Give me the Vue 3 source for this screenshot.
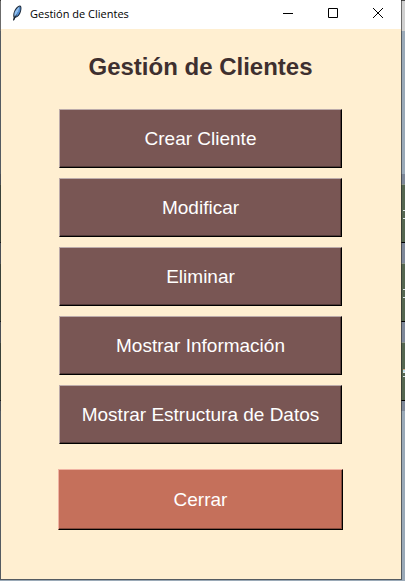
<script setup>
const title = 'Gestión de Clientes'
const actions = [
  'Crear Cliente',
  'Modificar',
  'Eliminar',
  'Mostrar Información',
  'Mostrar Estructura de Datos',
]
</script>

<template>
  <div class="desktop">
    <div class="window">
      <header class="titlebar">
        <svg class="feather" width="16" height="16" viewBox="0 0 16 16" aria-hidden="true">
          <path d="M11 .5 C13 .9 12.6 4.6 11.8 7 C11 9.6 9.2 12.2 6.4 12.8 L5 15.6 L4 15.4 L4.6 12.6 C3.6 9.6 5.2 5.2 7 3 C8.4 1.4 9.8 .4 11 .5 Z" fill="#1b2735" />
          <path d="M11 1.2 C12 2.8 11.4 5.4 10.8 7 C10 9.2 8.6 11 6.8 11.8 L8.8 6.4 Z" fill="#4f8bd2" />
          <path d="M10.8 1.2 L9.4 6 L6 12 C4.2 9.2 5.8 4.6 10.8 1.2 Z" fill="#8fc0f2" />
          <path d="M7 10.4 L4.6 15" stroke="#16202c" stroke-width=".8" fill="none" />
        </svg>
        <span class="caption">{{ title }}</span>
        <div class="controls">
          <button type="button" class="control" aria-label="Minimizar">
            <svg width="10" height="10" viewBox="0 0 10 10"><path d="M0 5.5H10" /></svg>
          </button>
          <button type="button" class="control" aria-label="Maximizar">
            <svg width="10" height="10" viewBox="0 0 10 10"><path d="M.5 .5H9.5V9.5H.5Z" /></svg>
          </button>
          <button type="button" class="control" aria-label="Cerrar ventana">
            <svg width="10" height="10" viewBox="0 0 10 10"><path d="M0 0L10 10M10 0L0 10" /></svg>
          </button>
        </div>
      </header>
      <main class="content">
        <h1>{{ title }}</h1>
        <div class="actions">
          <button v-for="action in actions" :key="action" type="button" class="action">
            {{ action }}
          </button>
        </div>
        <button type="button" class="action close">Cerrar</button>
      </main>
    </div>
    <div class="behind" aria-hidden="true"></div>
  </div>
</template>

<style>
body {
  margin: 0;
}
</style>

<style scoped>
.desktop {
  display: grid;
  grid-template-columns: 1fr 3px;
  box-sizing: border-box;
  min-height: 100vh;
  padding-bottom: 1px;
  font-family: "Liberation Sans", Arial, sans-serif;
  background: linear-gradient(
    #4a4a4a 0 1px, #d0d0d0 1px 31px, #9aa9b7 31px 174px,
    #7d8797 174px 184px, #8d958c 184px 185px, #556650 185px 242px, #000 242px 243px,
    #7d8797 243px 263px, #8d958c 263px 264px, #556650 264px 321px, #000 321px 322px,
    #7d8797 322px 342px, #8d958c 342px 343px, #556650 343px 400px, #000 400px 401px,
    #7d8797 401px 411px, #9aa9b7 411px
  );
}
.window {
  display: flex;
  flex-direction: column;
  border: 1px solid rgba(40, 40, 40, 0.6);
  border-top: 0;
  background: #ffefd1;
  background-clip: padding-box;
}
.behind {
  background: linear-gradient(
    transparent 0 210px, #dfe8ea 210px 211px, transparent 211px 218px, #dfe8ea 218px 219px,
    transparent 219px 289px, #dfe8ea 289px 290px, transparent 290px 297px, #dfe8ea 297px 298px,
    transparent 298px 369px, #c9a98c 369px 370px, #b9dbe4 370px 372px, #dfe8ea 372px 373px,
    transparent 373px 376px, #dfe8ea 376px 377px, transparent 377px
  ) right / 2px 100% no-repeat;
}
.titlebar {
  display: flex;
  align-items: center;
  height: 29px;
  padding-left: 8px;
  background: #fff;
}
.feather {
  flex: none;
  margin-bottom: 3px;
}
.caption {
  flex: 1;
  padding-left: 5px;
  padding-bottom: 2px;
  font: 11px/16px "Open Sans", "Noto Sans", sans-serif;
  color: #000;
  white-space: nowrap;
}
.controls {
  display: flex;
  height: 26px;
  margin-bottom: 3px;
}
.control {
  display: flex;
  align-items: center;
  justify-content: center;
  width: 46px;
  padding: 0;
  border: 0;
  background: transparent;
}
.control:nth-child(2) {
  width: 44px;
}
.control path {
  fill: none;
  stroke: #000;
}
.content {
  display: flex;
  flex-direction: column;
  padding: 24px 58px 49px 57px;
}
h1 {
  margin: 0 0 28px;
  font-size: 24px;
  line-height: 28px;
  text-align: center;
  color: #3e2f2f;
}
.actions {
  display: flex;
  flex-direction: column;
  gap: 10px;
  padding: 0 1px;
}
.action {
  height: 59px;
  padding: 0;
  border: 1px solid;
  border-color: #bcabaa #000 #000 #bcabaa;
  background: #795654;
  box-shadow: inset -1px -1px #513a38;
  font: 19px/22px "Liberation Sans", Arial, sans-serif;
  color: #fff;
}
.close {
  height: 61px;
  margin-top: 25px;
  border-color: #f0b3a3 #000 #000 #f0b3a3;
  background: #c5705b;
  box-shadow: inset -1px -1px #834b3d;
}
</style>
